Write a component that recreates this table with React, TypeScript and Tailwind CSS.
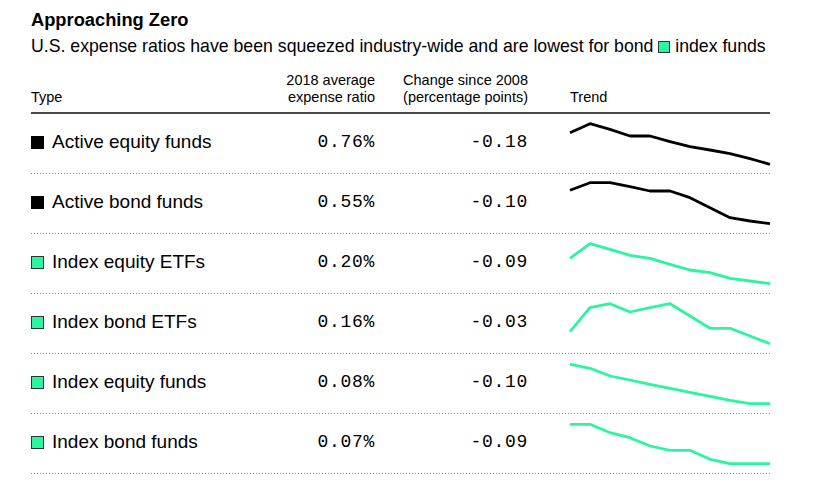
import React from "react";

type Row = { label: string; color: "black" | "green"; ratio: string; change: string; ys: number[] };

const rows: Row[] = [
  { label: "Active equity funds", color: "black", ratio: "0.76%", change: "-0.18", ys: [18.7, 9.7, 15.3, 22, 22, 27.7, 32.7, 36, 39.7, 44.7, 50.3] },
  { label: "Active bond funds", color: "black", ratio: "0.55%", change: "-0.10", ys: [16.3, 8.7, 8.7, 12.7, 17, 17, 23.7, 33.7, 43.7, 47, 49.7] },
  { label: "Index equity ETFs", color: "green", ratio: "0.20%", change: "-0.09", ys: [24.3, 9.7, 15.3, 21.3, 24.3, 30.3, 36, 38.7, 44.3, 47, 49.7] },
  { label: "Index bond ETFs", color: "green", ratio: "0.16%", change: "-0.03", ys: [37.7, 13.7, 9.7, 18, 13.7, 9.7, 22, 34.3, 34.3, 42, 49.7] },
  { label: "Index equity funds", color: "green", ratio: "0.08%", change: "-0.10", ys: [10.3, 14.3, 22, 26, 30.3, 34.3, 38.3, 42.3, 46.3, 49.7, 49.7] },
  { label: "Index bond funds", color: "green", ratio: "0.07%", change: "-0.09", ys: [10.3, 10.3, 18.7, 23.7, 32, 36.3, 36.3, 45.3, 49.7, 49.7, 49.7] },
];

function Spark({ ys, color }: { ys: number[]; color: string }) {
  const pts = ys.map((y, i) => `${i * 20},${y}`).join(" ");
  return (
    <svg width="200" height="60" viewBox="0 0 200 60" className="block overflow-visible">
      <polyline points={pts} fill="none" stroke={color} strokeWidth="2.8" strokeLinejoin="round" strokeLinecap="butt" />
    </svg>
  );
}

export default function App() {
  return (
    <div className="w-[839px] h-[493px] bg-white text-black pl-[31px] pt-[10px] font-['Liberation_Sans',Arial,sans-serif]">
      <div className="w-[739px]">
        <div className="text-[18.3px] font-bold leading-[20px]">Approaching Zero</div>
        <div className="text-[17.7px] leading-[20px] mt-[6px] whitespace-nowrap">
          U.S. expense ratios have been squeezed industry-wide and are lowest for bond{" "}
          <span className="inline-block w-[12px] h-[12px] bg-[#2cf5a0] border border-[#333] align-[-1px]"></span>{" "}
          index funds
        </div>
        <div className="flex items-end mt-[16px] pb-[6px] border-b-2 border-[#4a4a4a] text-[14.5px] leading-[17px]">
          <div className="w-[244px]">Type</div>
          <div className="w-[100px] text-right">
            2018 average
            <br />
            expense ratio
          </div>
          <div className="w-[153px] text-right">
            Change since 2008
            <br />
            (percentage points)
          </div>
          <div className="ml-[42px]">Trend</div>
        </div>
        {rows.map((r) => (
          <div key={r.label}>
            <div className="flex items-center h-[59px]">
              <div className="w-[244px] flex items-center pb-[3px]">
                <span
                  className={
                    r.color === "black"
                      ? "w-[13px] h-[13px] bg-black mr-[8px]"
                      : "w-[13px] h-[13px] bg-[#2cf5a0] border border-[#333] mr-[8px]"
                  }
                ></span>
                <span className="text-[19px] leading-[22px]">{r.label}</span>
              </div>
              <div className="w-[100px] text-right font-['Liberation_Mono',monospace] text-[18px] tracking-[0.7px] pb-[3px]">
                {r.ratio}
              </div>
              <div className="w-[153px] text-right font-['Liberation_Mono',monospace] text-[18px] tracking-[0.7px] pb-[3px]">
                {r.change}
              </div>
              <div className="ml-[42px] self-start">
                <Spark ys={r.ys} color={r.color === "black" ? "#000000" : "#2cf5a0"} />
              </div>
            </div>
            <div className="h-px bg-[repeating-linear-gradient(to_right,#8a8a8a_0_1px,transparent_1px_3px)]"></div>
          </div>
        ))}
      </div>
    </div>
  );
}
